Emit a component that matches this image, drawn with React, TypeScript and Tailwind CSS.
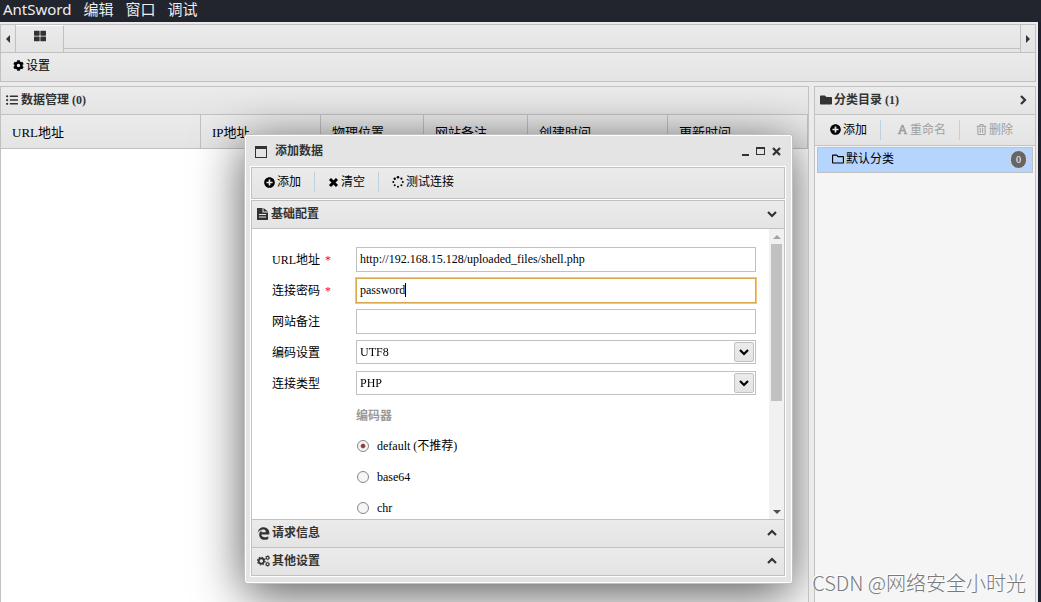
import { useState } from "react";
import type { ReactNode } from "react";
import {
  FaCog,
  FaEdgeLegacy,
  FaFolder,
  FaFont,
  FaListUl,
  FaPlusCircle,
  FaRegFolder,
  FaRegTrashAlt,
  FaThLarge,
} from "react-icons/fa";

const COLUMNS = [
  { label: "URL地址", width: "w-[200px]" },
  { label: "IP地址", width: "w-[120px]" },
  { label: "物理位置", width: "w-[103px]" },
  { label: "网站备注", width: "w-[104px]" },
  { label: "创建时间", width: "w-[140px]" },
  { label: "更新时间", width: "" },
];

const ENCODERS = [
  { value: "default", label: "default (不推荐)" },
  { value: "base64", label: "base64" },
  { value: "chr", label: "chr" },
];

const bar = "bg-linear-to-b from-[#ebebeb] to-[#e4e4e4]";

function Chevron({ dir, className = "" }: { dir: "up" | "down" | "right"; className?: string }) {
  const points = { up: "1,7 5,3 9,7", down: "1,3 5,7 9,3", right: "3,1 7,5 3,9" }[dir];
  return (
    <svg viewBox="0 0 10 10" className={`size-[10px] ${className}`} aria-hidden="true">
      <polyline points={points} fill="none" stroke="currentColor" strokeWidth="2.2" />
    </svg>
  );
}

function Arrow({ dir }: { dir: "left" | "right" | "up" | "down" }) {
  const points = {
    left: "4,0 4,8 0,4",
    right: "0,0 0,8 4,4",
    up: "0,4 8,4 4,0",
    down: "0,0 8,0 4,4",
  }[dir];
  const tall = dir === "left" || dir === "right";
  return (
    <svg
      viewBox={tall ? "0 0 4 8" : "0 0 8 4"}
      className={tall ? "h-2 w-1" : "h-1 w-2"}
      aria-hidden="true"
    >
      <polygon points={points} fill="currentColor" />
    </svg>
  );
}

function FileIcon() {
  return (
    <svg viewBox="0 0 12 13" className="h-[13px] w-3" aria-hidden="true">
      <path
        d="M0 0h5.5v4.5H11V12H0zM6.5 0l4.5 3.6H6.5zM2 6v1h7V6zM2 8.5v1h7v-1z"
        fill="currentColor"
        fillRule="evenodd"
      />
    </svg>
  );
}

function CrossIcon() {
  return (
    <svg viewBox="0 0 11 11" className="size-[11px]" aria-hidden="true">
      <path d="M2 2l7 7M9 2l-7 7" stroke="currentColor" strokeWidth="3" />
    </svg>
  );
}

function SpinnerIcon() {
  const dots = [
    [6, 1.3, 1.3],
    [9.4, 2.7, 1.1],
    [10.8, 6, 1],
    [9.4, 9.3, 1],
    [6, 10.7, 1],
    [2.7, 9.3, 1],
    [1.3, 6, 1],
    [2.7, 2.7, 1.2],
  ];
  return (
    <svg viewBox="0 0 12 12" className="size-3" aria-hidden="true">
      {dots.map(([cx, cy, r]) => (
        <circle key={`${cx}-${cy}`} cx={cx} cy={cy} r={r} fill="currentColor" />
      ))}
    </svg>
  );
}

function CogsIcon() {
  return (
    <svg viewBox="0 0 13 12" className="h-3 w-[13px]" fill="none" stroke="currentColor" aria-hidden="true">
      <circle cx="4.3" cy="6" r="2.6" strokeWidth="1.7" />
      <circle cx="4.3" cy="6" r="3.8" strokeWidth="1.2" strokeDasharray="1.5 1.48" />
      <circle cx="10.6" cy="2.8" r="1.4" strokeWidth="1.1" />
      <circle cx="10.6" cy="2.8" r="2.1" strokeWidth=".7" strokeDasharray="1.1 1.1" />
      <circle cx="10.6" cy="9.2" r="1.4" strokeWidth="1.1" />
      <circle cx="10.6" cy="9.2" r="2.1" strokeWidth=".7" strokeDasharray="1.1 1.1" />
    </svg>
  );
}

function ToolButton({ icon, children, disabled }: { icon: ReactNode; children: ReactNode; disabled?: boolean }) {
  return (
    <button
      type="button"
      disabled={disabled}
      className="flex items-center gap-[2px] pr-[13px] pl-3 text-black disabled:text-[#a0a0a0]"
    >
      {icon}
      {children}
    </button>
  );
}

function Divider() {
  return <div className="mr-px h-5 w-px bg-[#bcd3df]" />;
}

function SectionHeader({ icon, title, open }: { icon: ReactNode; title: string; open?: boolean }) {
  return (
    <button
      type="button"
      aria-expanded={!!open}
      className={`flex h-[28px] w-full shrink-0 items-center gap-[2px] border-b border-[#c1c1c1] pr-[7px] pb-px pl-[5px] font-bold text-[#333] ${bar}`}
    >
      {icon}
      {title}
      <Chevron dir={open ? "down" : "up"} className="ml-auto" />
    </button>
  );
}

function Field({ id, label, required, children }: { id: string; label: string; required?: boolean; children: ReactNode }) {
  return (
    <div className="flex h-[31px] items-start">
      <label htmlFor={id} className="w-[84px] shrink-0 leading-[26px]">
        {label}
        {required && <span className="ml-[5px] text-[#ff0000]">*</span>}
      </label>
      {children}
    </div>
  );
}

function Select({ id, options }: { id: string; options: string[] }) {
  return (
    <div className="relative flex-1">
      <select id={id} className="block h-6 w-full appearance-none border border-[#c1c1c1] bg-white px-[3px] outline-none">
        {options.map((o) => (
          <option key={o}>{o}</option>
        ))}
      </select>
      <span className={`pointer-events-none absolute top-[2px] right-[2px] flex size-5 items-center justify-center rounded-xs border border-[#c1c1c1] text-black ${bar}`}>
        <Chevron dir="down" />
      </span>
    </div>
  );
}

function MenuBar() {
  return (
    <nav className="flex h-[22px] shrink-0 items-center gap-3 bg-[#22252e] pb-1 pl-[3px] font-['Noto_Sans','Noto_Sans_CJK_SC',sans-serif] text-[15px] leading-[18px] text-[#eee]">
      {["AntSword", "编辑", "窗口", "调试"].map((item) => (
        <button key={item} type="button">{item}</button>
      ))}
    </nav>
  );
}

function TabBar() {
  return (
    <div className={`flex h-[28px] shrink-0 border-b border-[#c1c1c1] text-[#333] ${bar}`}>
      <button type="button" aria-label="向左滚动" className="flex w-[15px] items-center justify-center border-r border-[#c1c1c1]">
        <Arrow dir="left" />
      </button>
      <button type="button" aria-label="首页" className="flex w-[48px] items-center justify-center border-t border-r border-t-white border-r-[#c1c1c1] pb-[6px]">
        <FaThLarge className="size-[12px]" />
      </button>
      <div className="mb-[3px] flex-1 border-b border-[#c1c1c1]" />
      <button type="button" aria-label="向右滚动" className="flex w-[15px] items-center justify-center border-l border-[#c1c1c1]">
        <Arrow dir="right" />
      </button>
    </div>
  );
}

// the dialog lives inside the panel so that its shadow stops at the panel edge
function DataPanel({ children }: { children: ReactNode }) {
  return (
    <section className="relative flex min-w-0 flex-1 flex-col overflow-hidden border border-b-0 border-[#c1c1c1] bg-white">
      <h2 className={`flex h-[28px] shrink-0 items-center gap-[3px] border-b border-[#c1c1c1] pb-px pl-[5px] font-bold text-[#333] ${bar}`}>
        <FaListUl className="size-[12px]" />
        数据管理 (0)
      </h2>
      <table className="w-full table-fixed border-separate border-spacing-0 text-[13px]">
        <thead>
          <tr className={`h-[34px] ${bar}`}>
            {COLUMNS.map((col) => (
              <th key={col.label} className={`border-r border-b border-[#c1c1c1] px-[11px] pt-[3px] text-left font-normal ${col.width}`}>
                {col.label}
              </th>
            ))}
          </tr>
        </thead>
      </table>
      {children}
    </section>
  );
}

function CategoryPanel() {
  return (
    <aside className="flex w-[222px] shrink-0 flex-col border border-b-0 border-[#c1c1c1] bg-[#f5f5f5]">
      <h2 className={`flex h-[28px] shrink-0 items-center gap-[2px] border-b border-[#c1c1c1] pr-[7px] pb-px pl-[5px] font-bold text-[#333] ${bar}`}>
        <FaFolder className="size-[12px]" />
        分类目录 (1)
        <button type="button" aria-label="折叠" className="ml-auto">
          <Chevron dir="right" />
        </button>
      </h2>
      <div className={`flex h-[31px] shrink-0 items-center border-b border-[#c1c1c1] pb-px pl-[3px] ${bar}`}>
        <ToolButton icon={<FaPlusCircle className="size-[11px]" />}>添加</ToolButton>
        <Divider />
        <div className="pl-[3px]">
          <ToolButton disabled icon={<FaFont className="size-[11px]" />}>重命名</ToolButton>
        </div>
        <Divider />
        <div className="pl-[3px]">
          <ToolButton disabled icon={<FaRegTrashAlt className="size-[11px]" />}>删除</ToolButton>
        </div>
      </div>
      <button type="button" className="mx-[2px] mt-px flex h-[26px] items-center gap-[2px] border border-[#c1c1c1] bg-[#b5d5ff] pr-[5px] pb-[2px] pl-[14px]">
        <FaRegFolder className="size-[12px]" />
        默认分类
        <span className="mt-px ml-auto flex h-[19px] w-[17px] items-center justify-center rounded-full border border-[#ddd] bg-[#666] text-[10px] text-white">
          0
        </span>
      </button>
    </aside>
  );
}

function AddDialog() {
  const [url, setUrl] = useState("http://192.168.15.128/uploaded_files/shell.php");
  const [password, setPassword] = useState("password");
  const [note, setNote] = useState("");
  const [encoder, setEncoder] = useState("default");
  const input = "h-[25px] min-w-0 flex-1 border border-[#c1c1c1] bg-white px-[3px] pb-px outline-none focus:border-[#d9a84e] focus:ring-1 focus:ring-[#f0c878]";

  return (
    <div
      role="dialog"
      aria-label="添加数据"
      className="absolute top-[47px] left-[243px] w-[549px] rounded-[3px] border border-[#c1c1c1] bg-[#e4e4e4] pr-[6px] pb-[6px] pl-[5px] shadow-[inset_0_0_0_1px_#fff,0_10px_50px_rgba(0,0,0,0.66)]"
    >
      <div className="flex h-[31px] items-center px-[5px] pt-px font-bold text-[#333]">
        <svg viewBox="0 0 12 12" className="mt-px mr-2 size-[12px]" aria-hidden="true">
          <path d="M0 0h12v12H0zM1 3v8h10V3z" fill="currentColor" fillRule="evenodd" />
        </svg>
        添加数据
        <div className="ml-auto flex items-center gap-[7px]">
          <button type="button" aria-label="最小化">
            <svg viewBox="0 0 7 9" className="h-[9px] w-[7px]"><path d="M0 7h7v2H0z" fill="currentColor" /></svg>
          </button>
          <button type="button" aria-label="最大化">
            <svg viewBox="0 0 9 8" className="h-2 w-[9px]"><path d="M0 0h9v8H0zM1 2v5h7V2z" fill="currentColor" fillRule="evenodd" /></svg>
          </button>
          <button type="button" aria-label="关闭">
            <svg viewBox="0 0 9 9" className="size-[9px]"><path d="M1 1l7 7M8 1L1 8" stroke="currentColor" strokeWidth="2.2" /></svg>
          </button>
        </div>
      </div>

      <div className="border border-white">
        <div className={`flex h-[32px] items-center border border-[#c1c1c1] pb-[2px] ${bar}`}>
          <ToolButton icon={<FaPlusCircle className="size-[11px]" />}>添加</ToolButton>
          <Divider />
          <ToolButton icon={<CrossIcon />}>清空</ToolButton>
          <Divider />
          <ToolButton icon={<SpinnerIcon />}>测试连接</ToolButton>
        </div>
        <div className="border-t border-white">
          <div className="border border-b-0 border-[#c1c1c1] bg-white">
            <SectionHeader open icon={<FileIcon />} title="基础配置" />
            <div className="flex h-[291px] border-b border-[#c1c1c1]">
              <form className="min-w-0 flex-1 overflow-hidden pt-[18px] pr-[13px] pl-5">
                <Field id="url" label="URL地址" required>
                  <input id="url" className={input} value={url} onChange={(e) => setUrl(e.target.value)} />
                </Field>
                <Field id="password" label="连接密码" required>
                  <div className="relative flex flex-1">
                    <input
                      id="password"
                      autoFocus
                      className={`${input} caret-transparent`}
                      value={password}
                      onChange={(e) => setPassword(e.target.value)}
                    />
                    {password === "password" && (
                      <span className="pointer-events-none absolute top-[5px] left-[49px] h-[14px] w-px bg-black" />
                    )}
                  </div>
                </Field>
                <Field id="note" label="网站备注">
                  <input id="note" className={input} value={note} onChange={(e) => setNote(e.target.value)} />
                </Field>
                <Field id="encode" label="编码设置">
                  <Select id="encode" options={["UTF8", "GBK", "BIG5"]} />
                </Field>
                <Field id="type" label="连接类型">
                  <Select id="type" options={["PHP", "ASP", "JSP"]} />
                </Field>
                <fieldset className="ml-[84px]">
                  <legend className="flex h-[28px] items-center pb-px font-bold text-[#999]">编码器</legend>
                  {ENCODERS.map((enc) => (
                    <label key={enc.value} className="flex h-[31px] items-center gap-2">
                      <input
                        type="radio"
                        name="encoder"
                        checked={encoder === enc.value}
                        onChange={() => setEncoder(enc.value)}
                        className="ml-px size-[12px] appearance-none rounded-full border border-[#8c8487] bg-[#f5f5f5] checked:bg-radial checked:from-[#8f4040] checked:from-25% checked:to-[#f5f5f5] checked:to-40%"
                      />
                      {enc.label}
                    </label>
                  ))}
                </fieldset>
              </form>
              {/* scrollbar */}
              <div className="flex w-[15px] flex-col items-center bg-[#f1f1f1]">
                <div className="flex h-[15px] items-center text-[#a3a3a3]"><Arrow dir="up" /></div>
                <div className="h-[157px] w-[11px] bg-[#c1c1c1]" />
                <div className="mt-auto flex h-[15px] items-center text-[#505050]"><Arrow dir="down" /></div>
              </div>
            </div>
            <SectionHeader icon={<FaEdgeLegacy className="size-[13px]" />} title="请求信息" />
            <SectionHeader icon={<CogsIcon />} title="其他设置" />
          </div>
        </div>
      </div>
    </div>
  );
}

export default function App() {
  return (
    <div className="relative flex h-screen flex-col overflow-hidden bg-[#ebebeb] font-['Liberation_Serif','Noto_Sans_CJK_SC',serif] text-[12px] leading-4 text-black">
      <MenuBar />
      <div className="flex min-h-0 flex-1 border-r-3 border-[#1b202c] pt-[2px] pr-[2px]">
        <div className="flex min-w-0 flex-1 flex-col">
          <div className="border border-[#c1c1c1]">
            <TabBar />
            <div className={`flex h-[28px] items-center pb-[3px] ${bar}`}>
              <ToolButton icon={<FaCog className="size-[11px]" />}>设置</ToolButton>
            </div>
          </div>
          <div className="flex min-h-0 flex-1 gap-[5px] pt-1">
            <DataPanel>
              <AddDialog />
            </DataPanel>
            <CategoryPanel />
          </div>
        </div>
      </div>
      <div className="pointer-events-none absolute right-[15px] bottom-[7px] font-['Noto_Sans_CJK_SC',sans-serif] text-[20px] leading-6 font-light text-[#7a7a7a] [text-shadow:-1px_-1px_0_#fff]">
        CSDN @网络安全小时光
      </div>
    </div>
  );
}
